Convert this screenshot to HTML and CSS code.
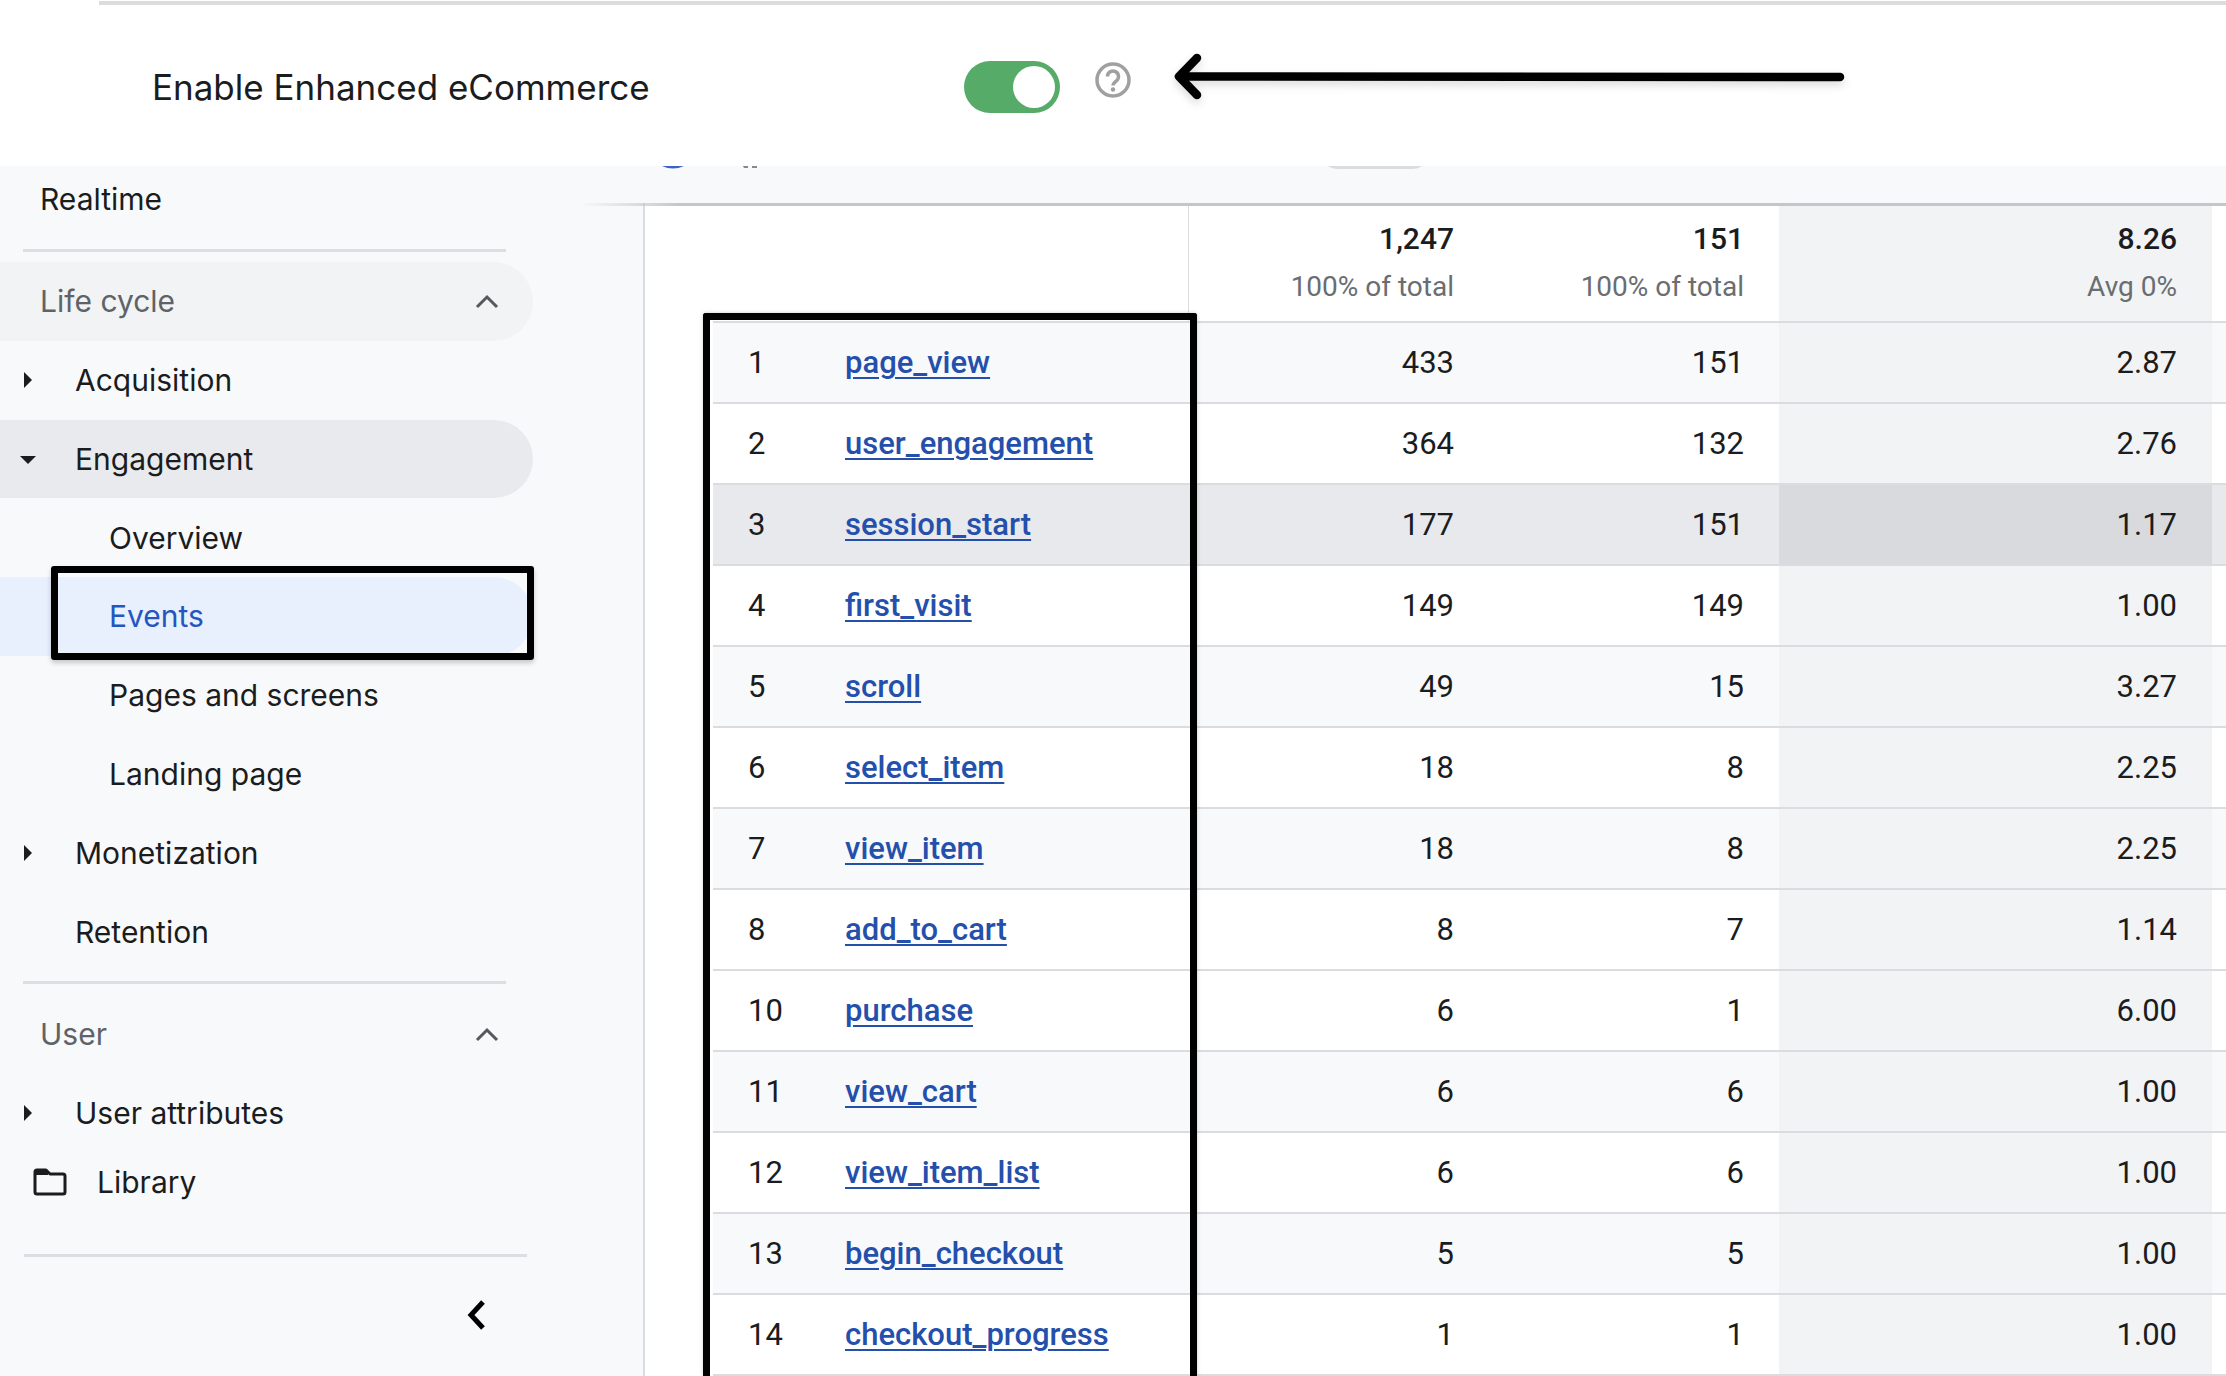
FILE: index.html
```html
<!DOCTYPE html>
<html lang="en">
<head>
<meta charset="utf-8">
<title>Events report</title>
<link rel="stylesheet" href="styles.css">
</head>
<body>
<header class="setting">
  <label class="setting-label" for="enhanced">Enable Enhanced eCommerce</label>
  <input class="toggle" type="checkbox" role="switch" id="enhanced" checked>
  <button class="help" type="button" aria-label="Help">
    <svg width="38" height="38" viewBox="0 0 38 38" fill="none" stroke="#a0a0a0" stroke-width="3.500"><circle cx="19" cy="19" r="16"/><path d="M13.500 15.500a5.500 5.500 0 1 1 8.800 4.400c-2 1.500-3.300 2.400-3.300 4.600"/><circle cx="19" cy="28.500" r="2.200" fill="#a0a0a0" stroke="none"/></svg>
  </button>
  <svg class="arrow" width="672" height="48" viewBox="0 0 672 48" fill="none" stroke="#000" stroke-width="8.500" stroke-linecap="round" stroke-linejoin="round"><path d="M6 23.500 666 24M23 5 5 23.500 23 42"/></svg>
</header>
<div class="report">
  <nav class="sidebar" aria-label="Reports">
    <a class="item item-top" href="#">Realtime</a>
    <hr class="rule">
    <div class="group group-life">
      <button class="item section hovered" type="button">Life cycle<svg class="chevron" width="24" height="18" viewBox="0 0 24 18" fill="none" stroke="#55585c" stroke-width="3"><path d="M2 15 12 5 22 15"/></svg></button>
      <button class="item parent" type="button"><svg class="caret" width="16" height="16" viewBox="0 0 16 16"><path d="M4 0 12 8 4 16z"/></svg>Acquisition</button>
      <button class="item parent open" type="button"><svg class="caret" width="16" height="16" viewBox="0 0 16 16"><path d="M0 5H16L8 13z"/></svg>Engagement</button>
      <a class="item child" href="#">Overview</a>
      <a class="item child selected" href="#" aria-current="page">Events</a>
      <a class="item child" href="#">Pages and screens</a>
      <a class="item child" href="#">Landing page</a>
      <button class="item parent" type="button"><svg class="caret" width="16" height="16" viewBox="0 0 16 16"><path d="M4 0 12 8 4 16z"/></svg>Monetization</button>
      <a class="item leaf" href="#">Retention</a>
    </div>
    <hr class="rule">
    <div class="group">
      <button class="item section" type="button">User<svg class="chevron" width="24" height="18" viewBox="0 0 24 18" fill="none" stroke="#55585c" stroke-width="3"><path d="M2 15 12 5 22 15"/></svg></button>
      <button class="item parent" type="button"><svg class="caret" width="16" height="16" viewBox="0 0 16 16"><path d="M4 0 12 8 4 16z"/></svg>User attributes</button>
    </div>
    <a class="item library" href="#"><svg width="34" height="28" viewBox="0 0 34 28" fill="none" stroke="#1b1c1e" stroke-width="3" stroke-linejoin="round"><path d="M2 24V4q0-2 2-2h9l4 4h13q2 0 2 2v16q0 2-2 2H4q-2 0-2-2z"/><path d="M3 5h12" stroke-width="4"/></svg>Library</a>
    <hr class="rule rule-wide">
    <button class="collapse" type="button" aria-label="Collapse"><svg width="20" height="32" viewBox="0 0 20 32" fill="none" stroke="#000" stroke-width="5"><path d="M17 3 5 16 17 29"/></svg></button>
  </nav>
  <main class="content">
    <div class="toolbar">
      <svg class="peek-dot" width="22" height="3" viewBox="0 0 22 3"><path d="M0 0H22Q11 5 0 0z" fill="#3b62c4"/></svg>
      <svg class="peek-text" width="18" height="3" viewBox="0 0 18 3"><path d="M2 0h5v2H3zM11 0h5v2h-5z" fill="#85888c"/></svg>
      <svg class="peek-pill" width="94" height="3" viewBox="0 0 94 3"><path d="M0 0H94Q90 3 84 3H10Q4 3 0 0z" fill="#dadce0"/></svg>
    </div>
    <div class="panel">
      <table class="events">
        <colgroup><col class="c-rank"><col class="c-name"><col class="c-count"><col class="c-users"><col><col class="c-next"></colgroup>
        <thead>
          <tr>
            <td colspan="2" class="name-end"></td>
            <td><strong>1,247</strong><small>100% of total</small></td>
            <td><strong>151</strong><small>100% of total</small></td>
            <td class="shade"><strong>8.26</strong><small>Avg 0%</small></td>
            <td></td>
          </tr>
        </thead>
        <tbody>
          <tr class="odd"><td>1</td><td class="name"><a href="#">page_view</a></td><td>433</td><td>151</td><td class="shade">2.87</td><td></td></tr>
          <tr><td>2</td><td class="name"><a href="#">user_engagement</a></td><td>364</td><td>132</td><td class="shade">2.76</td><td></td></tr>
          <tr class="hover"><td>3</td><td class="name"><a href="#">session_start</a></td><td>177</td><td>151</td><td class="shade">1.17</td><td></td></tr>
          <tr><td>4</td><td class="name"><a href="#">first_visit</a></td><td>149</td><td>149</td><td class="shade">1.00</td><td></td></tr>
          <tr class="odd"><td>5</td><td class="name"><a href="#">scroll</a></td><td>49</td><td>15</td><td class="shade">3.27</td><td></td></tr>
          <tr><td>6</td><td class="name"><a href="#">select_item</a></td><td>18</td><td>8</td><td class="shade">2.25</td><td></td></tr>
          <tr class="odd"><td>7</td><td class="name"><a href="#">view_item</a></td><td>18</td><td>8</td><td class="shade">2.25</td><td></td></tr>
          <tr><td>8</td><td class="name"><a href="#">add_to_cart</a></td><td>8</td><td>7</td><td class="shade">1.14</td><td></td></tr>
          <tr><td>10</td><td class="name"><a href="#">purchase</a></td><td>6</td><td>1</td><td class="shade">6.00</td><td></td></tr>
          <tr class="odd"><td>11</td><td class="name"><a href="#">view_cart</a></td><td>6</td><td>6</td><td class="shade">1.00</td><td></td></tr>
          <tr><td>12</td><td class="name"><a href="#">view_item_list</a></td><td>6</td><td>6</td><td class="shade">1.00</td><td></td></tr>
          <tr class="odd"><td>13</td><td class="name"><a href="#">begin_checkout</a></td><td>5</td><td>5</td><td class="shade">1.00</td><td></td></tr>
          <tr><td>14</td><td class="name"><a href="#">checkout_progress</a></td><td>1</td><td>1</td><td class="shade">1.00</td><td></td></tr>
        </tbody>
      </table>
      <div class="marker"></div>
    </div>
  </main>
</div>
</body>
</html>
```
FILE: styles.css
```css
* { box-sizing: border-box; }
body {
  margin: 0;
  min-height: 100vh;
  display: flex;
  flex-direction: column;
  background: #fff;
  color: #1b1c1e;
  font-family: Roboto, "Liberation Sans", sans-serif;
  font-size: 31px;
  line-height: 40px;
}
button {
  border: 0;
  padding: 0;
  background: none;
  color: inherit;
  font: inherit;
  text-align: left;
}
a { color: inherit; text-decoration: none; }
svg { flex: none; display: block; }

/* Setting bar */
.setting {
  display: flex;
  align-items: flex-start;
  height: 165px;
  margin: 1px 0 0 99px;
  padding: 56px 0 0 53px;
  border-top: 4px solid #dcdcdc;
}
.setting-label {
  width: 812px;
  padding-top: 6px;
  font-family: Inter, sans-serif;
  font-size: 35px;
}
.toggle {
  appearance: none;
  flex: none;
  width: 96px;
  height: 52px;
  margin: 0;
  padding: 5px;
  border-radius: 26px;
  background: #55ab67;
}
.toggle::before {
  content: "";
  display: block;
  width: 42px;
  height: 42px;
  margin-left: 44px;
  border-radius: 50%;
  background: #fff;
}
.help { margin-left: 34px; }
.arrow {
  margin: -8px 0 0 42px;
  filter: drop-shadow(0 4px 4px rgba(0, 0, 0, .15));
}

/* Report body */
.report {
  flex: 1;
  display: grid;
  grid-template-columns: 643px minmax(0, 1fr);
  background: #f8f9fb;
}
.sidebar {
  display: flex;
  flex-direction: column;
  align-items: flex-start;
  font-family: Inter, sans-serif;
  font-size: 30px;
}
.rule {
  width: 483px;
  height: 3px;
  margin: 10px 0 10px 23px;
  border: 0;
  background: #dcdee1;
}
.rule-wide { width: 503px; margin: 42px 0 42px 24px; }
.group {
  display: grid;
  grid-auto-rows: 1fr;
  width: 533px;
  min-height: 158px;
}
.group-life { min-height: 709px; }
.item {
  position: relative;
  display: flex;
  align-items: center;
}
.item-top { height: 65px; padding: 0 0 0 40px; margin-bottom: 8px; }
.section {
  justify-content: space-between;
  padding: 0 34px 0 40px;
  border-radius: 0 40px 40px 0;
  color: #5f6368;
}
.hovered { background: #f1f3f4; }
.parent { padding-left: 20px; gap: 39px; }
.open { background: #e8eaed; border-radius: 0 40px 40px 0; }
.leaf { padding-left: 75px; }
.child { padding-left: 109px; }
.selected {
  background: #e8effd;
  border-radius: 0 40px 40px 0;
  color: #2456c0;
}
.selected::after {
  content: "";
  position: absolute;
  inset: -11px -1px -4px 51px;
  border: 7px solid #000;
  border-radius: 3px;
  box-shadow: 0 3px 5px rgba(0, 0, 0, .2);
}
.caret { fill: #1b1c1e; }
.library { height: 60px; padding-left: 33px; gap: 30px; }
.collapse { margin-left: 466px; }

/* Events table */
.content {
  display: flex;
  flex-direction: column;
}
.toolbar {
  display: flex;
  align-items: flex-start;
  height: 37px;
  padding-left: 19px;
}
.peek-text { margin-left: 57px; }
.peek-pill { margin-left: 569px; }
.panel {
  position: relative;
  flex: 1;
  padding: 3px 0 0 68px;
  border-left: 2px solid #dadce0;
  background: #fff;
}
.panel::before {
  content: "";
  position: absolute;
  top: 0;
  left: -65px;
  right: 0;
  height: 3px;
  background: linear-gradient(90deg, transparent, #c4c6c9 100px);
}
.events {
  width: 100%;
  table-layout: fixed;
  border-collapse: separate;
  border-spacing: 0;
  text-align: right;
}
.c-rank { width: 132px; }
.c-name { width: 344px; }
.c-count { width: 300px; }
.c-users { width: 290px; }
.c-next { width: 14px; }
.events td {
  height: 81px;
  padding: 0 35px 0 0;
  border-bottom: 2px solid #dadce0;
}
.events td:last-child { padding: 0; }
.events td:first-child { padding: 0 0 0 35px; text-align: left; }
.events thead td {
  height: 117px;
  padding-top: 13px;
  vertical-align: top;
}
.events .name-end { border-right: 1px solid #dadce0; }
.events strong { display: block; font-size: 30px; font-weight: 500; }
.events small {
  display: block;
  margin-top: 8px;
  color: #6a6d71;
  font-size: 28px;
}
.events .name { padding: 0; text-align: left; }
.name a {
  color: #2450ac;
  font-weight: 500;
  text-decoration: underline;
  text-decoration-thickness: 2px;
  text-underline-offset: 4px;
}
.shade { background: #f1f3f5; }
.odd { background: #f8f9fb; }
.hover { background: #e8e9ed; }
.hover .shade { background: #d9dadd; }
.marker {
  position: absolute;
  top: 110px;
  bottom: 0;
  left: 58px;
  width: 494px;
  border: 7px solid #000;
  border-bottom: 0;
  border-radius: 3px 3px 0 0;
  pointer-events: none;
  box-shadow: 0 0 4px rgba(0, 0, 0, .2);
}
```
